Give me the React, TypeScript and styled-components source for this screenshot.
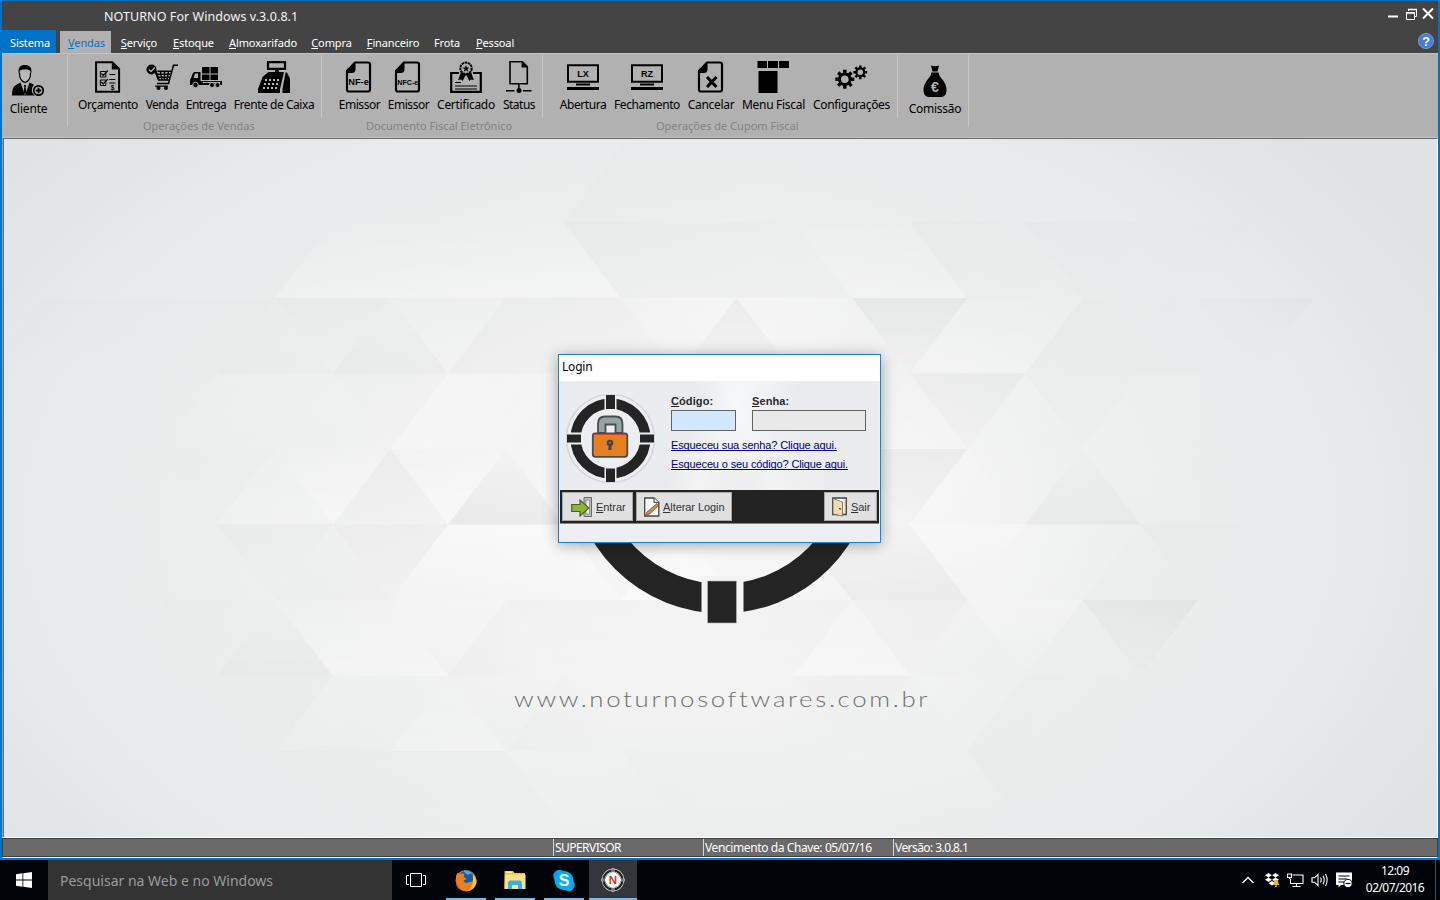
import React from 'react';
import styled, { createGlobalStyle, css } from 'styled-components';

const GlobalStyle = createGlobalStyle`
  * { box-sizing: border-box; }
  body { margin: 0; background: #000; overflow: hidden; }
`;

const ui = `"Noto Sans", "Open Sans", sans-serif`;
const arial = `"Liberation Sans", Arial, sans-serif`;

/* ---------- application window ---------- */

const Screen = styled.div`
  width: 1440px;
  height: 900px;
  display: flex;
  flex-direction: column;
  font-family: ${ui};
  font-size: 12px;
  color: #000;
  cursor: default;
`;

const AppWindow = styled.main`
  height: 860px;
  display: flex;
  flex-direction: column;
  border: 2px solid #0173c7;
  border-top-width: 1px;
`;

const TitleBar = styled.header`
  height: 29px;
  flex: none;
  display: flex;
  justify-content: space-between;
  background: #444;
  color: #f4f4f4;
`;

const AppTitle = styled.h1`
  margin: 0 0 0 102px;
  font-size: 12.5px;
  font-weight: 400;
  line-height: 31px;
  letter-spacing: 0.07px;
  white-space: nowrap;
`;

const WindowButtons = styled.div`
  display: flex;
  gap: 5px;
  padding: 6px 4px 0 0;
`;

const MenuBar = styled.nav`
  height: 23px;
  flex: none;
  display: flex;
  background: #444;
`;

const MenuItem = styled.a<{ $w: number; $kind?: 'system' | 'active'; $nudge?: boolean }>`
  width: ${p => p.$w}px;
  flex: none;
  height: 23px;
  line-height: 25px;
  padding-left: ${p => (p.$nudge ? 1 : 0)}px;
  text-align: center;
  white-space: nowrap;
  font-size: 11px;
  letter-spacing: -0.12px;
  color: #fff;
  ${p => p.$kind === 'system' && css`padding-left: 2px; background: #0173c7;`}
  ${p => p.$kind === 'active' && css`
    height: 22px;
    margin: 1px 2px 0 4px;
    padding-left: 2px;
    line-height: 23px;
    background: #b1b1b1;
    color: #0173c7;
  `}
`;

const HelpSlot = styled.div`
  margin: 3px 4px 0 auto;
  height: 16px;
`;

const Ribbon = styled.section`
  height: 85px;
  flex: none;
  display: flex;
  background: #b1b1b1;
  border-top: 1px solid #c3c3c3;
  border-bottom: 1px solid #c3c3c3;
`;

const RibbonGroup = styled.div<{ $w: number }>`
  width: ${p => p.$w}px;
  flex: none;
  display: flex;
  padding-top: 1px;
`;

const GroupBody = styled.div<{ $pad: number; $tall?: boolean }>`
  flex: 1;
  display: flex;
  flex-direction: column;
  padding: ${p => (p.$tall ? 10 : 6)}px 0 0 ${p => p.$pad}px;
`;

const Tools = styled.div`
  display: flex;
  gap: 8px;
`;

const Tool = styled.button<{ $w: number }>`
  width: ${p => p.$w}px;
  padding: 0;
  border: 0;
  background: none;
  color: #000;
  font-family: ${ui};
  font-size: 12px;
  display: flex;
  flex-direction: column;
  align-items: center;
  svg { display: block; flex: none; }
`;

const ToolLabel = styled.span<{ $ls: number }>`
  line-height: 16px;
  margin-top: 4px;
  white-space: nowrap;
  letter-spacing: ${p => p.$ls}px;
`;

const Caption = styled.div<{ $indent: number }>`
  margin: 5px 0 0 ${p => p.$indent}px;
  line-height: 16px;
  font-size: 11px;
  color: #838383;
  white-space: nowrap;
`;

const Separator = styled.i<{ $h: number }>`
  width: 1px;
  flex: none;
  height: ${p => p.$h}px;
  background: #c6c6c6;
`;

const Desktop = styled.section`
  flex: 1;
  position: relative;
  border-top: 1px solid #696969;
  border-left: 1px solid #a0a0a0;
  border-right: 1px solid #fff;
  border-bottom: 1px solid #fff;
  box-shadow: inset 1px 0 0 #696969;
`;

const Wallpaper = styled.svg`
  display: block;
  width: 1433px;
  height: 698px;
  margin-left: 1px;
`;

const StatusBar = styled.footer`
  height: 20px;
  flex: none;
  display: flex;
  background: #6a6a6a;
  border: 1px solid #404040;
  border-bottom-color: #fff;
  box-shadow: inset 0 -1px 0 #404040;
  color: #fff;
`;

const StatusCell = styled.div<{ $w?: number; $ls?: number }>`
  ${p => (p.$w ? `width: ${p.$w}px; flex: none;` : 'flex: 1;')}
  height: 17px;
  line-height: 17px;
  padding-left: 1px;
  font-size: 12px;
  letter-spacing: ${p => p.$ls ?? 0}px;
  white-space: nowrap;
  border-left: 1px solid #d8d8d8;
  &:first-child { border-left: 0; }
`;

/* ---------- login dialog ---------- */

const Dialog = styled.section`
  position: absolute;
  left: 555px;
  top: 215px;
  width: 323px;
  height: 189px;
  display: flex;
  flex-direction: column;
  border: 1px solid #1883d7;
  background: #edeff2;
  box-shadow: 0 2px 14px rgba(0, 0, 0, 0.34);
`;

const DialogTitle = styled.h2`
  margin: 0;
  height: 26px;
  flex: none;
  padding-left: 3px;
  line-height: 24px;
  letter-spacing: -0.2px;
  font-size: 12px;
  font-weight: 400;
  background: #fff;
`;

const DialogBody = styled.div`
  height: 109px;
  flex: none;
  display: flex;
  margin-right: 1px;
  background: linear-gradient(115deg, transparent 42%, rgba(255,255,255,.4) 50%, transparent 66%),
    linear-gradient(65deg, transparent 50%, rgba(255,255,255,.35) 58%, transparent 74%), #eaecef;
`;

const Emblem = styled.svg`
  width: 90px;
  height: 90px;
  margin: 12px 0 0 6px;
  flex: none;
`;

const Form = styled.form`
  margin: 12px 0 0 16px;
  display: flex;
  flex-direction: column;
`;

const Fields = styled.div`
  display: flex;
  gap: 16px;
  margin-bottom: 5px;
`;

const Field = styled.label`
  display: flex;
  flex-direction: column;
  font: bold 11px/17px ${arial};
  letter-spacing: 0.1px;
  color: #2a2a2a;
`;

const Input = styled.input<{ $w: number; $focus?: boolean }>`
  width: ${p => p.$w}px;
  height: 21px;
  padding: 0 3px;
  border: 1px solid #646464;
  border-radius: 0;
  outline: 0;
  background: ${p => (p.$focus ? '#d3e8ff' : '#e9e9e9')};
`;

const Link = styled.a`
  font: 11px/19px ${arial};
  letter-spacing: -0.135px;
  color: #000080;
  text-decoration: underline;
  text-decoration-skip-ink: none;
  white-space: nowrap;
`;

const Actions = styled.div`
  height: 34px;
  flex: none;
  margin: 0 1px;
  display: flex;
  gap: 3px;
  padding: 2px 2px 0;
  background: #232323;
  border-bottom: 1px solid #8a8583;
`;

const ActionButton = styled.button<{ $w: number; $end?: boolean; $pad: number; $gap: number }>`
  width: ${p => p.$w}px;
  height: 29px;
  padding: 0 0 0 ${p => p.$pad}px;
  margin-left: ${p => (p.$end ? 'auto' : '0')};
  display: flex;
  align-items: center;
  gap: ${p => p.$gap}px;
  border: 1px solid #a8a8a8;
  border-radius: 0;
  background: #e1e1e1;
  color: #333;
  font: 11px ${arial};
  letter-spacing: -0.07px;
  white-space: nowrap;
`;

/* ---------- taskbar ---------- */

const Taskbar = styled.footer`
  height: 40px;
  display: flex;
  background: #000408;
  color: #fff;
`;

const TaskButton = styled.div<{ $w: number; $line?: number; $active?: boolean }>`
  width: ${p => p.$w}px;
  height: 40px;
  flex: none;
  display: flex;
  align-items: center;
  justify-content: center;
  background: ${p => (p.$active ? '#33373b' : 'transparent')};
  ${p => p.$active && 'margin-left: -1px;'}
  ${p => p.$line && css`
    background-image: linear-gradient(#76b9ed, #76b9ed);
    background-size: ${p.$line}px 2px;
    background-position: bottom center;
    background-repeat: no-repeat;
  `}
`;

const Search = styled.div`
  width: 344px;
  flex: none;
  padding-left: 12px;
  line-height: 41px;
  font-size: 14px;
  letter-spacing: 0;
  color: #9b9b9b;
  background: #333;
`;

const Tray = styled.div`
  margin-left: auto;
  display: flex;
  align-items: center;
  gap: 6px;
  svg { display: block; }
`;

const Clock = styled.time`
  width: 72px;
  margin-right: -2px;
  padding-bottom: 3px;
  text-align: center;
  font-size: 12px;
  line-height: 17px;
  letter-spacing: -0.55px;
`;

const ShowDesktop = styled.i`
  width: 5px;
  height: 40px;
  border-left: 1px solid #4b4e51;
`;

/* ---------- ribbon icons ---------- */

const Icon = ({ children, x = 0 }: { children: React.ReactNode; x?: number }) => (
  <svg width="32" height="32" viewBox={`${x} 0 32 32`} fill="#000" overflow="visible">{children}</svg>
);

const PageOutline = () => (
  <>
    <path d="M12 1.500H25a2 2 0 0 1 2 2V28.500a2 2 0 0 1-2 2H6a2 2 0 0 1-2-2V10Z" fill="none" stroke="#000" strokeWidth="2.200" strokeLinejoin="round" />
    <path d="M12.500 1V8.500q0 3.500-4 3.500H3V10Z" />
  </>
);

const Monitor = ({ text }: { text: string }) => (
  <Icon>
    <path d="M1 4.200H31V20.800H1Z" fill="none" stroke="#000" strokeWidth="2" />
    <path d="M9 22.500H23V24.500H9ZM0 26H32V29H0Z" />
    <text x="16" y="16" textAnchor="middle" fontFamily={arial} fontWeight="700" fontSize="9">{text}</text>
  </Icon>
);

const gearTeeth = [0, 45, 90, 135, 180, 225, 270, 315];
const Gear = ({ x, y, s }: { x: number; y: number; s: number }) => (
  <g transform={`translate(${x} ${y}) scale(${s})`}>
    <circle r="5.300" fill="none" stroke="#000" strokeWidth="3" />
    {gearTeeth.map(a => <rect key={a} x="-1.700" y="-9.500" width="3.400" height="4" transform={`rotate(${a})`} />)}
  </g>
);

const icons = {
  cliente: (
    <Icon x={1}>
      <path d="M7.500 7.500Q7 15.500 13 17.500Q19 15.500 18.500 7.500" fill="#b9b9b9" stroke="#000" strokeWidth="1.200" />
      <path d="M6.800 8.500C5.500 2.500 8.500 0 13 0s7.500 2.500 6.200 8.500L18 5.500Q13 3 8 5.500Z" />
      <path d="M8.500 17.500 13 30.500 17.500 17.500 22 19.800a7 7 0 0 0 .5 10.700H0Q0 22.500 3 20.500Z" />
      <path d="M9.700 17.500 13 28l3.300-10.500q-3.300 2-6.600 0Z" fill="#b1b1b1" />
      <path d="M12 20h2l-.4 2.200L14.500 27 13 29.500 11.500 27l.9-4.800Z" />
      <circle cx="26.500" cy="25.500" r="4.700" fill="#b1b1b1" stroke="#000" strokeWidth="1.800" />
      <path d="M26.500 22.800v5.400M23.800 25.500h5.400" stroke="#000" strokeWidth="1.800" />
    </Icon>
  ),
  orcamento: (
    <Icon x={0.7}>
      <path d="M4.800 1.200H21L27.800 8V30.800H4.800Z" fill="none" stroke="#000" strokeWidth="2" />
      <path d="M20.500 0V8.500H29Z" />
      <path d="M9 10.500h5.500V16H9ZM9 19h5.500v5.500H9Z" fill="none" stroke="#000" />
      <path d="m10 12.500 2 2 4.500-5M10 21l2 2 4.500-5M18 13.500h6M18 18.500h6M18 22h6" fill="none" stroke="#000" strokeWidth="1.200" />
      <text x="19.500" y="28.500" fontFamily={arial} fontSize="6.500" fontWeight="700">$</text>
    </Icon>
  ),
  venda: (
    <Icon>
      <circle cx="5.500" cy="8.500" r="5" />
      <path d="m3 8.500 2 2 3.800-4" fill="none" stroke="#b1b1b1" strokeWidth="1.300" />
      <path d="M32 4.300H27.500L22.500 22.500H11M11.500 10.300H26M9.500 10.300 13 19H23.500M10.500 13.300H25M12 16.200H24M14.500 10.300 16 19M18.500 10.300V19M22.500 10.300 21 19" fill="none" stroke="#000" strokeWidth="1.500" />
      <path d="M8 9.500h2.500l3.500 10h-2ZM9 24.500h13v1.200H9Z" />
      <circle cx="12.500" cy="27" r="2" /><circle cx="20" cy="27" r="2" />
    </Icon>
  ),
  entrega: (
    <Icon>
      <path d="M12 6h7.500v6.500H12ZM20.500 6H28v6.500h-7.500ZM12 13.500h7.500V19H12ZM20.500 13.500H28V19h-7.500Z" />
      <path d="M10.500 11H5Q2.500 11 1.500 16L0 19v5h32v-4H10.500ZM5 12.500h3V17H3.500Z" fillRule="evenodd" />
      <path d="M13 21h17v1H13Z" fill="#b1b1b1" />
      <circle cx="5.500" cy="24" r="2.800" stroke="#b1b1b1" /><circle cx="22" cy="24" r="2.500" stroke="#b1b1b1" /><circle cx="27.500" cy="24" r="2.500" stroke="#b1b1b1" />
    </Icon>
  ),
  caixa: (
    <Icon>
      <path d="M10 1.200H27V7.800H10Z" fill="none" stroke="#000" strokeWidth="2.200" />
      <path d="M17 8h4v4h-4ZM10.500 11H26L22 28V32H0V28L4.500 16ZM27.500 11.500H29l3 6V32H24.500V28Z" />
      <g fill="#b1b1b1">
        {[18, 22, 26].map((y, r) => [7, 11, 15, 19].map(x => <rect key={`${x}-${y}`} x={x - r} y={y} width="2" height="2" />))}
      </g>
    </Icon>
  ),
  nfe: (
    <Icon x={1}><PageOutline /><path d="M5 16H25.500V25.500H5Z" fill="#b1b1b1" />
      <text x="5.300" y="24.300" fontFamily={arial} fontWeight="700" fontSize="9.500" textLength="20.500" lengthAdjust="spacingAndGlyphs">NF-e</text></Icon>
  ),
  nfce: (
    <Icon x={1}><PageOutline />
      <text x="5.300" y="24.300" fontFamily={arial} fontWeight="700" fontSize="7.500" textLength="21" lengthAdjust="spacingAndGlyphs">NFC-e</text></Icon>
  ),
  certificado: (
    <Icon>
      <path d="M1.200 12H30.800V30.800H1.200Z" fill="none" stroke="#000" strokeWidth="2.200" />
      <path d="M9 9H23V20H9Z" fill="#b1b1b1" />
      <path d="m11 11-2.800 8 3-.6 1.500 1.600 2.600-5.500h1.400L19.300 20l1.500-1.600 3 .6L21 11Z" />
      <circle cx="16" cy="7.300" r="5.700" fill="#b1b1b1" stroke="#000" strokeWidth="2" strokeDasharray="2.500 .6" />
      <path d="m16 4 1 2.500h2.500l-2 1.700.8 2.600L16 9.300l-2.300 1.500.8-2.600-2-1.700H15Z" />
      <path d="M5 21.500H11M5 25H27M5 28H27" stroke="#000" strokeWidth="1.200" />
    </Icon>
  ),
  status: (
    <Icon>
      <path d="M7 .8H19.500L24.300 5.800V22.800H7Z" fill="none" stroke="#000" strokeWidth="1.600" />
      <path d="M18.500 0V6.500H25ZM15 23h1.600v5H15Z" />
      <circle cx="16" cy="29.500" r="2.500" /><path d="M3 29.800H11.500M20 29.800H28.500" stroke="#000" strokeWidth="1.400" />
    </Icon>
  ),
  lx: <Monitor text="LX" />,
  rz: <Monitor text="RZ" />,
  cancelar: (
    <Icon><PageOutline /><path d="m12 16 9.500 10M21.500 16 12 26" stroke="#000" strokeWidth="3.200" /></Icon>
  ),
  menu: (
    <Icon x={1}><path d="M.5 0h9.500v7H.5ZM11 0h10v7H11ZM22 0h10v7H22ZM1.500 10H20.500V32H1.500Z" /></Icon>
  ),
  config: <Icon x={0.7}><Gear x={9.500} y={18.200} s={1} /><Gear x={25} y={11.300} s={0.73} /></Icon>,
  comissao: (
    <Icon>
      <path d="M12 0.500q4 1.500 8 0L18.500 6.500H13.500ZM12.500 7.500h7q.2 3 3.500 6.500Q28 20 27.500 26q-.5 6-6 6h-11q-5.500 0-6-6Q4 20 9 14q3.300-3.500 3.500-6.500Z" />
      <text x="15.800" y="26.500" textAnchor="middle" fontFamily={arial} fontWeight="700" fontSize="14" fill="#b1b1b1">€</text>
    </Icon>
  ),
};

type ToolDef = [string, number, keyof typeof icons, number?];

const salesTools: ToolDef[] = [['Orçamento', 60, 'orcamento', -0.4], ['Venda', 32, 'venda', -0.5], ['Entrega', 40, 'entrega', -0.5], ['Frente de Caixa', 80, 'caixa', -0.45]];
const docTools: ToolDef[] = [['Emissor', 41, 'nfe', -0.45], ['Emissor', 41, 'nfce', -0.45], ['Certificado', 58, 'certificado'], ['Status', 32, 'status', -0.5]];
const couponTools: ToolDef[] = [['Abertura', 46, 'lx', -0.45], ['Fechamento', 66, 'rz', -0.4], ['Cancelar', 46, 'cancelar'], ['Menu Fiscal', 63, 'menu'], ['Configurações', 77, 'config', -0.33]];

const ToolRow = ({ tools }: { tools: ToolDef[] }) => (
  <Tools>
    {tools.map(([label, w, icon, ls], i) => (
      <Tool key={i} $w={w}>{icons[icon]}<ToolLabel $ls={ls ?? -0.3}>{label}</ToolLabel></Tool>
    ))}
  </Tools>
);

/* ---------- wallpaper ---------- */

type Facet = [string, 'l' | 'd', number, 'up' | 'down' | 'left' | 'right'];

/* Each facet lists "column,row" lattice points, its tone, strength and the side it fades from. */
const facets: Facet[] = [
  ['1,-1 5,-1 6,0 0,0', 'l', 0.5, 'down'],
  ['5,-1 9,-1 10,0 6,0', 'd', 0.03, 'left'],
  ['5,-1 7,-3 9,-1', 'd', 0.018, 'left'],
  ['9,-1 11,-1 12,0 10,0', 'l', 0.4, 'down'],
  ['11,-1 13,-1 14,0 12,0', 'd', 0.02, 'left'],
  ['13,-1 17,-1 16,0 14,0', 'd', 0.02, 'left'],
  ['-4,0 0,0 -1,1 -5,1', 'd', 0.012, 'up'],
  ['0,0 2,0 1,1', 'd', 0.022, 'up'],
  ['0,0 1,1 -1,1', 'd', 0.015, 'down'],
  ['2,0 3,1 1,1', 'd', 0.035, 'down'],
  ['2,0 4,0 3,1', 'l', 0.2, 'down'],
  ['4,0 6,0 7,1 3,1', 'd', 0.035, 'left'],
  ['6,0 8,0 7,1', 'l', 0.7, 'right'],
  ['8,0 9,1 7,1', 'd', 0.035, 'up'],
  ['8,0 10,0 11,1 9,1', 'l', 0.6, 'left'],
  ['10,0 12,0 11,1', 'd', 0.055, 'up'],
  ['12,0 14,0 13,1 11,1', 'l', 0.4, 'down'],
  ['14,0 16,0 17,1 13,1', 'd', 0.025, 'left'],
  ['16,0 18,0 17,1', 'd', 0.02, 'up'],
  ['-1,1 3,1 2,2 -2,2', 'l', 0.2, 'up'],
  ['1,1 3,1 2,2', 'd', 0.012, 'up'],
  ['3,1 5,1 4,2 2,2', 'l', 0.8, 'left'],
  ['11,1 13,1 12,2', 'd', 0.035, 'up'],
  ['11,1 12,2 10,2', 'l', 0.4, 'down'],
  ['13,1 14,2 12,2', 'l', 0.3, 'left'],
  ['13,1 15,1 14,2', 'd', 0.02, 'left'],
  ['15,1 17,1 16,2 14,2', 'l', 0.22, 'left'],
  ['-2,2 0,2 -1,3', 'd', 0.01, 'up'],
  ['0,2 1,3 -1,3', 'l', 0.35, 'down'],
  ['0,2 2,2 1,3', 'l', 0.85, 'down'],
  ['2,2 3,3 1,3', 'd', 0.04, 'up'],
  ['2,2 4,2 3,3', 'l', 0.8, 'down'],
  ['4,2 5,3 3,3', 'd', 0.07, 'down'],
  ['10,2 12,2 11,3', 'd', 0.045, 'up'],
  ['12,2 13,3 11,3', 'l', 0.9, 'left'],
  ['12,2 14,2 13,3', 'l', 0.25, 'left'],
  ['14,2 15,3 13,3', 'd', 0.04, 'down'],
  ['14,2 16,2 15,3', 'l', 0.15, 'up'],
  ['-1,3 1,3 0,4', 'd', 0.025, 'up'],
  ['1,3 3,3 2,4', 'd', 0.035, 'up'],
  ['1,3 2,4 0,4', 'd', 0.018, 'down'],
  ['3,3 5,3 6,4 2,4', 'l', 0.9, 'up'],
  ['9,3 11,3 12,4 10,4', 'd', 0.05, 'down'],
  ['11,3 13,3 12,4', 'l', 0.8, 'up'],
  ['13,3 15,3 14,4 12,4', 'l', 0.55, 'left'],
  ['15,3 16,4 14,4', 'd', 0.01, 'down'],
  ['15,3 17,3 16,4', 'd', 0.022, 'left'],
  ['6,4 5,3 7,3', 'd', 0.022, 'up'],
  ['6,4 7,3 8,4', 'l', 0.9, 'down'],
  ['-2,4 0,4 -1,5', 'd', 0.012, 'up'],
  ['0,4 1,5 -1,5', 'd', 0.03, 'down'],
  ['0,4 2,4 3,5 1,5', 'l', 0.6, 'down'],
  ['2,4 4,4 3,5', 'l', 0.3, 'up'],
  ['4,4 5,5 3,5', 'd', 0.025, 'left'],
  ['4,4 10,4 9,5 5,5', 'd', 0.022, 'up'],
  ['10,4 11,5 9,5', 'l', 0.65, 'down'],
  ['10,4 12,4 11,5', 'd', 0.02, 'up'],
  ['12,4 14,4 13,5', 'l', 0.4, 'up'],
  ['14,4 16,4 15,5', 'd', 0.06, 'up'],
  ['14,4 15,5 13,5', 'd', 0.012, 'left'],
  ['-1,5 0,6 -2,6', 'd', 0.014, 'left'],
  ['-1,5 1,5 0,6', 'd', 0.02, 'right'],
  ['1,5 3,5 2,6 0,6', 'l', 0.12, 'left'],
  ['3,5 4,6 2,6', 'l', 0.4, 'down'],
  ['5,5 6,6 4,6', 'd', 0.02, 'left'],
  ['9,5 11,5 10,6', 'd', 0.015, 'up'],
  ['11,5 13,5 12,6', 'l', 0.2, 'left'],
  ['13,5 15,5 14,6 12,6', 'd', 0.02, 'left'],
  ['0,6 4,6 5,7 1,7', 'd', 0.012, 'up'],
  ['4,6 6,6 7,7 5,7', 'l', 0.2, 'left'],
  ['6,6 8,6 7,7', 'd', 0.014, 'left'],
  ['10,6 12,6 13,7 9,7', 'l', 0.15, 'up'],
  ['12,6 14,6 13,7', 'd', 0.014, 'left'],
];

const latticePoints = (s: string) =>
  s.split(' ').map(p => {
    const [c, r] = p.split(',').map(Number);
    return `${275 + 57.7 * c},${298 + 75.5 * r}`;
  }).join(' ');

const fades = {
  up: [0, 0, 0, 1],
  down: [0, 1, 0, 0],
  left: [0, 0, 1, 0.3],
  right: [1, 0, 0, 0.3],
} as const;

const WallpaperArt = () => (
  <Wallpaper viewBox="4 139 1433 698">
    <defs>
      <radialGradient id="base" gradientUnits="userSpaceOnUse" cx="0" cy="0" r="1" gradientTransform="translate(680 520) scale(860 560)">
        <stop offset="0" stopColor="#f8f8f8" />
        <stop offset=".25" stopColor="#f4f4f4" />
        <stop offset=".5" stopColor="#eeefef" />
        <stop offset=".75" stopColor="#e8eaeb" />
        <stop offset="1" stopColor="#dfe3e6" />
      </radialGradient>
      <clipPath id="lowerHalf"><path d="M500 450H950V640H500Z" /></clipPath>
      {(Object.keys(fades) as (keyof typeof fades)[]).map(k => {
        const [x1, y1, x2, y2] = fades[k];
        return ['l', 'd'].map(t => (
          <linearGradient key={t + k} id={t + k} x1={x1} y1={y1} x2={x2} y2={y2}>
            <stop offset="0" stopColor={t === 'l' ? '#fff' : '#000'} />
            <stop offset="1" stopColor={t === 'l' ? '#fff' : '#000'} stopOpacity=".1" />
          </linearGradient>
        ));
      })}
    </defs>
    <rect x="4" y="139" width="1433" height="698" fill="url(#base)" />
    {facets.map(([pts, tone, o, side], i) => (
      <polygon key={i} points={latticePoints(pts)} fill={`url(#${tone}${side})`} opacity={o * (tone === 'l' ? 0.48 : 0.6)} />
    ))}
    <circle cx="722" cy="462" r="136.500" fill="none" stroke="#242424" strokeWidth="29.500" clipPath="url(#lowerHalf)" />
    <path d="M701.500 576H743.500V616H701.500Z" fill="#f4f4f4" />
    <path d="M707.500 581H736.500V623H707.500Z" fill="#242424" stroke="#bbb" strokeWidth=".6" />
    <text transform="translate(514 707) scale(1.2 1)" x="0" y="0" fontFamily="Lato, sans-serif" fontWeight="300" fontSize="21.500" fill="#707070" textLength="344.500" style={{ fontVariantLigatures: 'none' }}>www.noturnosoftwares.com.br</text>
  </Wallpaper>
);

const LockEmblem = () => (
  <Emblem viewBox="0 0 90 90">
    <circle cx="45.500" cy="45.500" r="44" fill="#eceef1" stroke="#d5d7da" strokeWidth="1.200" />
    <circle cx="45.500" cy="45.500" r="34.900" fill="none" stroke="#242424" strokeWidth="10.300" />
    <path d="M39.500 0H51.500V20H39.500ZM39.500 71H51.500V90H39.500ZM0 39.500H20V51.500H0ZM70 39.500H90V51.500H70Z" fill="#eceef1" />
    <circle cx="45.500" cy="45.500" r="44" fill="none" stroke="#d5d7da" strokeWidth="1.200" />
    <path d="M41 2H50V16H41ZM41 75.500H50V89H41ZM2 41.500H16V49.500H2ZM75 41.500H89V49.500H75Z" fill="#242424" />
    <path d="M33 40V31Q33 23.500 40 23.500H50.500Q57.500 23.500 57.500 31V40H50.500V31.500H40.500V40Z" fill="#95a5a5" stroke="#4a4d50" strokeWidth="1.800" />
    <rect x="27.800" y="40.300" width="34.500" height="23.500" rx="2.500" fill="#e67e22" stroke="#4a4d50" strokeWidth="1.800" />
    <path d="M30 41.500H60" stroke="#d2451e" strokeWidth="1" />
    <circle cx="45" cy="50" r="3.200" fill="#43474b" /><path d="M43.800 51H46.500V57H43.300Z" fill="#43474b" />
    <circle cx="45" cy="49.600" r=".9" fill="#e67e22" />
  </Emblem>
);

/* ---------- page ---------- */

const Hot = ({ children }: { children: string }) => <><u>{children[0]}</u>{children.slice(1)}</>;

const menus: [string, number, boolean?][] = [
  ['Serviço', 52], ['Estoque', 57], ['Almoxarifado', 82], ['Compra', 55], ['Financeiro', 67], ['Frota', 42, true], ['Pessoal', 54],
];

export default function App() {
  return (
    <Screen>
      <GlobalStyle />
      <AppWindow>
        <TitleBar>
          <AppTitle>NOTURNO For Windows v.3.0.8.1</AppTitle>
          <WindowButtons>
            <svg width="12" height="14"><path d="M0 8.500H10V10.500H0Z" fill="#fff" /></svg>
            <svg width="12" height="14" fill="none" stroke="#fff"><path d="M3.500 4V2.500H11.500V9.500H10" /><path d="M1.500 5.500H9.500V12.500H1.500Z" /><path d="M1 6H10M3 2.500H12" strokeWidth="1.600" /></svg>
            <svg width="12" height="14"><path d="m1 1.500 10 10M11 1.500 1 11.500" stroke="#fff" strokeWidth="2" /></svg>
          </WindowButtons>
        </TitleBar>
        <MenuBar>
          <MenuItem $w={54} $kind="system">Sistema</MenuItem>
          <MenuItem $w={51} $kind="active"><Hot>Vendas</Hot></MenuItem>
          {menus.map(([m, w, plain]) => <MenuItem key={m} $w={w} $nudge={m === 'Financeiro'}>{plain ? m : <Hot>{m}</Hot>}</MenuItem>)}
          <HelpSlot>
            <svg width="16" height="16"><circle cx="8" cy="8" r="7.600" fill="#4480d6" stroke="#7da6e2" strokeWidth=".8" />
              <text x="8" y="12.500" textAnchor="middle" fontFamily={arial} fontSize="12.500" fontWeight="700" fill="#fff">?</text></svg>
          </HelpSlot>
        </MenuBar>
        <Ribbon>
          <RibbonGroup $w={66}>
            <GroupBody $pad={8} $tall>
              <Tool $w={37}>{icons.cliente}<ToolLabel $ls={-0.2}>Cliente</ToolLabel></Tool>
            </GroupBody>
            <Separator $h={72} />
          </RibbonGroup>
          <RibbonGroup $w={254}>
            <GroupBody $pad={10}><ToolRow tools={salesTools} /><Caption $indent={65}>Operações de Vendas</Caption></GroupBody>
            <Separator $h={63} />
          </RibbonGroup>
          <RibbonGroup $w={221}>
            <GroupBody $pad={17}><ToolRow tools={docTools} /><Caption $indent={27}>Documento Fiscal Eletrônico</Caption></GroupBody>
            <Separator $h={63} />
          </RibbonGroup>
          <RibbonGroup $w={355}>
            <GroupBody $pad={17}><ToolRow tools={couponTools} /><Caption $indent={96}>Operações de Cupom Fiscal</Caption></GroupBody>
            <Separator $h={63} />
          </RibbonGroup>
          <RibbonGroup $w={71}>
            <GroupBody $pad={11} $tall>
              <Tool $w={52}>{icons.comissao}<ToolLabel $ls={-0.25}>Comissão</ToolLabel></Tool>
            </GroupBody>
            <Separator $h={72} />
          </RibbonGroup>
        </Ribbon>
        <Desktop>
          <WallpaperArt />
          <Dialog>
            <DialogTitle>Login</DialogTitle>
            <DialogBody>
              <LockEmblem />
              <Form>
                <Fields>
                  <Field><span><Hot>Código:</Hot></span><Input $w={65} $focus /></Field>
                  <Field><span><Hot>Senha:</Hot></span><Input $w={114} type="password" /></Field>
                </Fields>
                <Link>Esqueceu sua senha? Clique aqui.</Link>
                <Link>Esqueceu o seu código? Clique aqui.</Link>
              </Form>
            </DialogBody>
            <Actions>
              <ActionButton $w={71} $pad={8} $gap={4}>
                <svg width="21" height="20"><path d="M13 .500H20.500V19.500H13Z" fill="#b9c0c8" stroke="#666" /><path d="M15 3H18.500V17H15Z" fill="#e9edf0" stroke="#777" strokeWidth=".7" /><path d="M.700 7.500H9V3L17.800 11 9 19V14.500H.700Z" fill="#8fb53a" stroke="#4d5f28" strokeWidth="1.200" /></svg>
                <span><Hot>Entrar</Hot></span>
              </ActionButton>
              <ActionButton $w={96} $pad={7} $gap={3}>
                <svg width="16" height="20"><path d="M.700 1H10L14.800 5.500V19H.700Z" fill="#fff" stroke="#444" strokeWidth="1.300" /><path d="M10 1V5.500H14.800" fill="#eee" stroke="#444" /><path d="M1.500 18.500 3 15 13 6.500 14.800 8.500 5 17.500Z" fill="#e6843a" stroke="#555" strokeWidth=".8" /></svg>
                <span><Hot>Alterar Login</Hot></span>
              </ActionButton>
              <ActionButton $w={53} $end $pad={7} $gap={4}>
                <svg width="15" height="20"><path d="M.700 1H14.300V17.500H.700Z" fill="#f3e3bd" stroke="#444" strokeWidth="1.300" /><path d="M3.500 2H12V15H10Z" fill="#fff" /><path d="M1 1.500 10.500 5V19L1 17Z" fill="#f0dab0" stroke="#666" strokeWidth=".8" /><path d="M7 11.500l2 .6" stroke="#333" strokeWidth="1.300" /></svg>
                <span><Hot>Sair</Hot></span>
              </ActionButton>
            </Actions>
          </Dialog>
        </Desktop>
        <StatusBar>
          <StatusCell $w={550} />
          <StatusCell $w={150} $ls={-0.55}>SUPERVISOR</StatusCell>
          <StatusCell $w={190} $ls={-0.4}>Vencimento da Chave: 05/07/16</StatusCell>
          <StatusCell $ls={-0.57}>Versão: 3.0.8.1</StatusCell>
        </StatusBar>
      </AppWindow>
      <Taskbar>
        <TaskButton $w={48}>
          <svg width="16" height="16" fill="#fff"><path d="M0 2.300 6.500 1.300V7.500H0ZM7.300 1.200 16 0V7.500H7.300ZM0 8.400H6.500V14.700L0 13.700ZM7.300 8.400H16V16L7.300 14.800Z" /></svg>
        </TaskButton>
        <Search>Pesquisar na Web e no Windows</Search>
        <TaskButton $w={48}>
          <svg width="20" height="14" fill="none" stroke="#fff"><path d="M4.500.5H15.500V13.500H4.500ZM3 2.500H.5V11.500H3M17 2.500H19.500V11.500H17" /></svg>
        </TaskButton>
        <TaskButton $w={52} $line={40}>
          <svg width="22" height="23" viewBox="0 0 22 23">
            <circle cx="11" cy="11.500" r="10.500" fill="#e66a1c" />
            <circle cx="12" cy="9.500" r="8.200" fill="#1c5a9d" /><path d="M8 2q6-2 10 3-3-1-5 1-3-2-5-4" fill="#53a5dc" />
            <path d="M1 7 2.500 3.500 4.500 5.500Q7 4 9.500 5L8.500 8l3 1.200Q11 11 8.500 11.500 9.500 15 13.500 13.500 17 12 18.500 14 20 10 17 4.500q5.500 4.500 4.500 10Q19 22 11.500 22.500 3 22 1 14.500Z" fill="#ee7f22" />
            <path d="M17.800 5Q22 9 21 14.500 19 20 14 21.500 19 16 17.800 5" fill="#fbc63a" />
            <path d="M1 12Q2 20 10 22.300 4 22 1 16Z" fill="#c83b1a" />
          </svg>
        </TaskButton>
        <TaskButton $w={46} $line={40}>
          <svg width="22" height="20" viewBox="0 0 22 20"><path d="M.5 1H9L10.500 3H21V19H.5Z" fill="#e9c055" /><path d="M1 4.500H21.500V19H.5Z" fill="#fce08a" /><path d="M2 2.200H8" stroke="#fff" /><path d="M4 19V13Q4 10.500 6 10.500H16Q18 10.500 18 13V19H14V15H8V19Z" fill="#35b1e4" /></svg>
        </TaskButton>
        <TaskButton $w={52} $line={40}>
          <svg width="22" height="23" viewBox="0 0 22 23"><circle cx="6.500" cy="7" r="6.200" fill="#00a4e6" /><circle cx="15.500" cy="16" r="6.200" fill="#00a4e6" /><circle cx="11" cy="11.500" r="9.500" fill="#00aff0" />
            <text x="11" y="17" textAnchor="middle" fontFamily={arial} fontWeight="700" fontSize="16" fill="#fff">S</text></svg>
        </TaskButton>
        <TaskButton $w={48} $line={48} $active>
          <svg width="24" height="24" viewBox="0 0 24 24"><circle cx="12" cy="12" r="9.500" fill="none" stroke="#ddd" strokeWidth="3.400" /><circle cx="12" cy="12" r="9.500" fill="none" stroke="#222" strokeWidth="2.200" /><path d="M12 0V5M12 19V24M0 12H5M19 12H24" stroke="#ddd" strokeWidth="2.600" /><path d="M12 .5V4M12 20V23.500M.5 12H4M20 12H23.500" stroke="#222" /><circle cx="12" cy="12" r="7.500" fill="#fff" />
            <text x="12" y="16" textAnchor="middle" fontFamily={arial} fontWeight="700" fontSize="11.500" fill="#c8352b">N</text></svg>
        </TaskButton>
        <Tray>
          <svg width="18" height="18" fill="none" stroke="#fff" strokeWidth="1.300"><path d="M3.500 12 9 6.500l5.500 5.500" /></svg>
          <svg width="18" height="18" fill="#fff"><path d="M5.500 2 9 4.200 5.500 6.500 2 4.200ZM12.500 2 16 4.200 12.500 6.500 9 4.200ZM5.500 6.500 9 8.800 5.500 11 2 8.800ZM12.500 6.500 16 8.800 12.500 11 9 8.800ZM9 10l3.500 2.200L9 14.500 5.500 12.200Z" /><path d="M9.500 14q1.200-1 1.200-3 .3-2.200 2.300-2.200t2.300 2.200q0 2 1.200 3ZM12 14.500h2v1.500h-2Z" fill="#f2b134" /></svg>
          <svg width="18" height="18" fill="none" stroke="#fff" strokeWidth="1.100"><path d="M5.500 4H16V12.500H3.500V7.500M9.500 12.500V15.500M5.500 15.500H13.500M.5 3H4.500V6.500H.5ZM2.500 6.500V8" /></svg>
          <svg width="18" height="18" fill="none" stroke="#fff" strokeWidth="1.100"><path d="M1 6.800H3.500L7 3.500V14.500L3.500 11.200H1ZM9.500 6.500Q11 9 9.500 11.500M12 4.800Q14.500 9 12 13.200M14.500 3Q17.800 9 14.500 15" /></svg>
          <svg width="18" height="18"><path d="M1 1.500H17V14H6L3.500 16.500V14H1Z" fill="#fff" /><path d="M3.500 5H14.500M3.500 8H12M3.500 11H9" stroke="#000" strokeWidth="1.200" /><circle cx="13" cy="12.500" r="4.200" fill="#fff" stroke="#000" /><path d="M10.500 12.500H15.500" stroke="#000" strokeWidth="1.300" /></svg>
          <Clock>12:09<br />02/07/2016</Clock>
          <ShowDesktop />
        </Tray>
      </Taskbar>
    </Screen>
  );
}
